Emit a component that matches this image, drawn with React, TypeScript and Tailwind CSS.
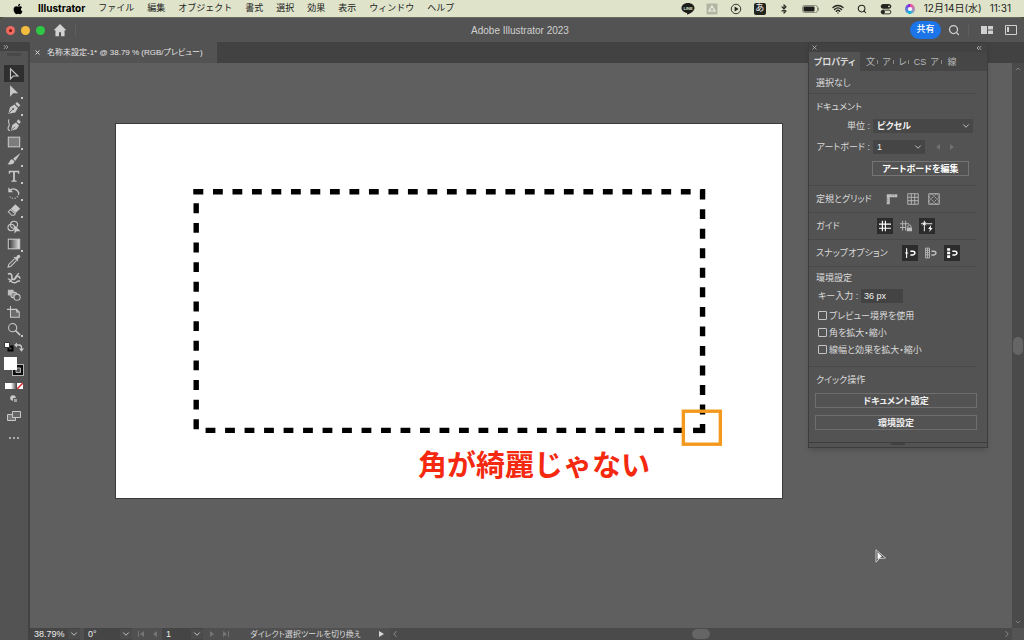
import { useState } from 'react';
import type { ReactNode } from 'react';
import {
  Bluetooth,
  ChevronDown,
  ChevronLeft,
  ChevronRight,
  ChevronUp,
  ChevronsLeft,
  ChevronsRight,
  Search,
  Wifi,
  X,
} from 'lucide-react';
import { FaApple } from 'react-icons/fa';

const menus = ['ファイル', '編集', 'オブジェクト', '書式', '選択', '効果', '表示', 'ウィンドウ', 'ヘルプ'];

const Glyph = ({ children, className = 'size-3.5' }: { children: ReactNode; className?: string }) => (
  <svg className={className} viewBox="0 0 16 16" fill="none" stroke="currentColor" strokeWidth={1.2} aria-hidden="true">
    {children}
  </svg>
);

/**
 * Tools in the left toolbar, top to bottom
 */
const tools: { name: string; more?: boolean; icon: ReactNode }[] = [
  { name: '選択', icon: <path d="M4 2v11.5l3.2-3.2h5.3z" strokeWidth={1.3} /> },
  { name: 'ダイレクト選択', more: true, icon: <path d="M3.500 1.5v13l3.5-3.8h5.800z" fill="currentColor" stroke="none" /> },
  {
    name: 'ペン',
    more: true,
    icon: (
      <>
        <path d="M1.5 14.5l2-7.5 5-3 4 4-3 5z" fill="currentColor" stroke="none" />
        <path d="M9.5 3l2-2 3.8 3.8-2 2z" fill="currentColor" stroke="none" />
        <path d="M2 14l4.5-4.5" stroke="#535353" strokeWidth={1} />
        <circle cx="7" cy="9" r="1.1" fill="#535353" stroke="none" />
      </>
    ),
  },
  {
    name: '曲線',
    icon: (
      <>
        <path d="M4.5 14.5l1.5-6.5 4.3-3 3.5 3.5-2.8 4.3z" fill="currentColor" stroke="none" />
        <path d="M11 4l2-2.5 2.8 3-2 2.3z" fill="currentColor" stroke="none" />
        <path d="M5 14l4-4" stroke="#535353" strokeWidth={1} />
        <path d="M2.5 1.5C-.5 4 4.5 6.500 2 9.500c-1.500 2-1 4.500 1.500 5" />
      </>
    ),
  },
  { name: '長方形', more: true, icon: <rect x="1.500" y="2.500" width="13" height="11" fill="#7d7d7d" /> },
  {
    name: 'ブラシ',
    more: true,
    icon: (
      <g fill="currentColor" stroke="none">
        <path d="M15.500 1L7 7.500l2.500 2.700z" />
        <path d="M6 8.300c-3.300 0-2.500 4.300-5.500 5.300 3 1.600 8 .8 8-2.900z" />
      </g>
    ),
  },
  {
    name: '文字',
    more: true,
    icon: <path d="M2 2h12v3.500h-1.200L12.300 3.600H9v9.300l2 .4V14.500H5v-1.200l2-.4V3.600H3.700L3.200 5.500H2z" fill="currentColor" stroke="none" />,
  },
  {
    name: '回転',
    more: true,
    icon: (
      <>
        <path d="M3 5.500a6 6 0 0 1 10.500 3.500" strokeWidth={1.500} />
        <path d="M13.500 9a6 6 0 0 1-10.500 3" strokeDasharray="1.500 1.500" />
        <path d="M1.500 1.500v5.500h5.500z" fill="currentColor" stroke="none" />
      </>
    ),
  },
  {
    name: '消しゴム',
    more: true,
    icon: (
      <>
        <path d="M9.500 1.500l5.500 5-5 5-5.500-5z" fill="currentColor" stroke="none" />
        <path d="M4 7.500L1.500 10l4 4h2.500l1.500-1.700z" />
      </>
    ),
  },
  {
    name: 'シェイプ形成',
    icon: (
      <>
        <circle cx="8" cy="5.500" r="4" />
        <circle cx="4.800" cy="8.500" r="3.700" />
        <path d="M8.500 6v9.500l2.500-2.600h4.500z" fill="currentColor" stroke="none" />
      </>
    ),
  },
  {
    name: 'グラデーション',
    more: true,
    icon: (
      <>
        <defs>
          <linearGradient id="tool-gradient">
            <stop offset="0" stopColor="#303030" />
            <stop offset="1" stopColor="#e6e6e6" />
          </linearGradient>
        </defs>
        <rect x="1.500" y="2.500" width="13" height="11" fill="url(#tool-gradient)" />
      </>
    ),
  },
  {
    name: 'スポイト',
    icon: (
      <>
        <path d="M8.500 5.500l-6.500 6.500-.8 3 3-.8 6.500-6.500" />
        <path d="M7.500 4l1.500-1 1.200 1L12 1.500a1.800 1.800 0 0 1 2.700 2.600L12.200 6l.8 1-1 1.500z" fill="currentColor" stroke="none" />
      </>
    ),
  },
  {
    name: 'パペットワープ',
    icon: (
      <>
        <path d="M1 3.500c3.500-1.500 5 1 4.500 3.500S7.500 10.500 9 9s1.500-3.500 3.500-3 2 2.500 3 2" strokeWidth={1.800} />
        <path d="M1 9c2 0 2.500 1.500 4 3s4.500 2 6 .500 2.500-1 4-1M2.500 12.500L7 8.500M9 8l4.500-5.500" strokeWidth={1.500} />
      </>
    ),
  },
  {
    name: 'ブレンド',
    icon: (
      <>
        <rect x="1" y="2" width="6.500" height="6.500" fill="#bdbdbd" stroke="none" />
        <rect x="4.500" y="5" width="6.500" height="6" rx="2" fill="#8c8c8c" />
        <circle cx="11.500" cy="10.500" r="3.500" fill="#535353" />
      </>
    ),
  },
  {
    name: 'アートボード',
    icon: (
      <>
        <path d="M4 1v4M0 5h4" />
        <path d="M4 5h7l3 3v6H4z" fill="#6b6b6b" />
        <path d="M11 5v3h3" />
      </>
    ),
  },
  {
    name: 'ズーム',
    more: true,
    icon: (
      <>
        <circle cx="6.500" cy="6.500" r="4.700" />
        <path d="M10 10l5 5" strokeWidth={2} />
      </>
    ),
  },
];

const MenuBar = () => (
  <header className="flex h-[17px] shrink-0 items-center bg-[#dfe3ca] pl-3 pr-[13px] text-[9px] text-[#22241e] [font-feature-settings:normal]">
    <FaApple className="size-3 text-black" />
    <nav className="ml-3.5 flex items-center gap-[13px] whitespace-nowrap">
      <button className="font-[Inter] text-[10px] font-bold text-black">Illustrator</button>
      {menus.map((menu) => (
        <button key={menu}>{menu}</button>
      ))}
    </nav>
    <div className="ml-auto flex items-center">
      <span className="flex w-6 justify-center">
        <svg className="h-3 w-3.5" viewBox="0 0 14 12" aria-label="LINE">
          <path d="M7 0C3.200 0 .5 2.300.5 5.100c0 2.500 2.300 4.500 5.500 5l.3 1.700C10 10.300 13.500 8 13.500 5.100 13.500 2.300 10.800 0 7 0z" fill="#1c1c1a" />
          <text x="7" y="6.600" textAnchor="middle" fontSize="4" fontWeight="700" fill="#dfe3ca">LINE</text>
        </svg>
      </span>
      <span className="flex w-6 justify-center">
        <svg className="size-3" viewBox="0 0 12 12">
          <rect x=".5" y=".5" width="11" height="11" rx="1" fill="#b3b5a3" />
          <path d="M6 3l3 5H3z" fill="none" stroke="#eef0e0" strokeWidth="1.200" />
        </svg>
      </span>
      <span className="flex w-6 justify-center">
        <Glyph className="size-3">
          <circle cx="8" cy="8" r="6.300" />
          <path d="M6.200 4.800v6.400L11.500 8z" fill="currentColor" stroke="none" />
        </Glyph>
      </span>
      <span className="flex w-6 justify-center">
        <span className="flex size-3 items-center justify-center rounded-xs bg-[#22241e] text-[9px] leading-none text-white">あ</span>
      </span>
      <span className="flex w-6 justify-center">
        <Bluetooth className="size-2.5" strokeWidth={2.500} />
      </span>
      <span className="flex w-[30px] justify-center">
        <svg className="h-2 w-[18px]" viewBox="0 0 18 8">
          <rect x=".5" y=".5" width="15" height="7" rx="2" fill="none" stroke="#8b8e7d" />
          <rect x="1.500" y="1.500" width="11" height="5" rx="1" fill="#1c1c1a" />
          <path d="M16.500 2.500v3" stroke="#8b8e7d" />
        </svg>
      </span>
      <span className="flex w-6 justify-center">
        <Wifi className="size-3" strokeWidth={2.800} />
      </span>
      <span className="flex w-6 justify-center">
        <Search className="size-2.5" strokeWidth={2.500} />
      </span>
      <span className="flex w-6 justify-center">
        <Glyph className="size-3">
          <rect x="1.500" y="2" width="13" height="5" rx="2.500" fill="currentColor" />
          <rect x="1.500" y="9.500" width="13" height="5" rx="2.500" />
          <circle cx="4" cy="12" r="2" fill="currentColor" />
          <circle cx="12" cy="4.500" r="1.200" fill="#dfe3ca" stroke="none" />
        </Glyph>
      </span>
      <span className="flex w-6 justify-center">
        <span className="flex size-2.5 items-center justify-center rounded-full bg-conic from-pink-500 via-cyan-500 to-purple-700">
          <span className="size-1 rounded-full bg-white" />
        </span>
      </span>
      <time className="flex gap-2 pl-0.5 font-[Inter,'Noto_Sans_CJK_JP',sans-serif] text-[10px] whitespace-nowrap">
        <span>12月14日(水)</span>
        <span>11:31</span>
      </time>
    </div>
  </header>
);

const TitleBar = () => (
  <div className="flex h-[25px] shrink-0 items-center rounded-t-md border-t border-[#6a6a60] bg-[#535353]">
    <div className="flex w-[130px] items-center pl-1.5">
      <div className="flex gap-1.5">
        <span className="flex size-[9px] items-center justify-center rounded-full bg-[#ee6a5f]">
          <span className="size-[3px] rounded-full bg-[#7c1710]" />
        </span>
        <span className="size-[9px] rounded-full bg-[#f5bd40]" />
        <span className="size-[9px] rounded-full bg-[#2fc845]" />
      </div>
      <button aria-label="ホーム" className="ml-2 text-[#d2d2d2]">
        <svg className="size-3.5" viewBox="0 0 16 16" fill="currentColor">
          <path d="M8 1L.8 8.200h2V15h4v-4.500h2.400V15h4V8.200h2z" />
        </svg>
      </button>
      <span className="ml-2 h-3 w-px bg-[#5e5e5e]" />
    </div>
    <h1 className="flex-1 text-center text-[10px] font-normal text-[#d0d0d0]">Adobe Illustrator 2023</h1>
    <div className="flex w-[114px] items-center text-[#d0d0d0]">
      <button className="h-[18px] w-[31px] rounded-full bg-[#1b74e8] text-[9px] font-medium text-white">共有</button>
      <button aria-label="検索" className="ml-[7px]">
        <Search className="size-3" strokeWidth={2.500} />
      </button>
      <span className="ml-2 h-3 w-px bg-[#5e5e5e]" />
      <button aria-label="ワークスペース" className="ml-3">
        <svg className="h-2 w-3" viewBox="0 0 12 8" fill="currentColor">
          <path d="M0 0h6v8H0zM7 0h5v3.500H7zM7 4.500h5V8H7z" />
        </svg>
      </button>
      <button aria-label="パネル" className="ml-3">
        <svg className="h-2.5 w-3" viewBox="0 0 12 10" fill="none" stroke="currentColor">
          <path d="M.5.5h11v9H.5z" />
          <path d="M2 2h2v5H2z" fill="currentColor" stroke="none" />
        </svg>
      </button>
    </div>
  </div>
);

const Toolbar = () => (
  <aside className="flex w-[30px] shrink-0 flex-col border-r-2 border-[#424242] bg-[#535353] text-[#c8c8c8]">
    <div className="flex h-[9px] items-center bg-[#424242] pl-0.5">
      <ChevronsRight className="size-2" />
    </div>
    <div className="flex h-3.5 justify-center pt-0.5">
      <span className="h-[3px] w-3.5 bg-[#484848]" />
    </div>
    <div className="flex flex-col items-center">
      {tools.map((tool, index) => (
        <button
          key={tool.name}
          aria-label={tool.name}
          className={`relative flex h-[17px] w-5 items-center justify-center ${index === 0 ? 'bg-[#2f2f2f]' : ''}`}
        >
          <Glyph>{tool.icon}</Glyph>
          {tool.more && <span className="absolute right-px bottom-0 size-0.5 bg-[#c8c8c8]" />}
        </button>
      ))}
    </div>
    <div className="flex h-5 items-center justify-between px-1">
      <svg className="size-2.5" viewBox="0 0 10 10">
        <path d="M4.500 4.500h4v4h-4z" fill="none" stroke="#000" strokeWidth="2" />
        <path d="M.5.500h5v5h-5z" fill="#fff" stroke="#333" />
      </svg>
      <svg className="size-2.5" viewBox="0 0 10 10" fill="none" stroke="currentColor" strokeWidth="1.300">
        <path d="M2.500 3h2.500q2.500 0 2.500 2.500V7" />
        <path d="M3 .5v5L0 3zM5 6.500h5L7.500 9.800z" fill="currentColor" stroke="none" />
      </svg>
    </div>
    <svg className="ml-1 h-5 w-5" viewBox="0 0 20 20">
      <path d="M8 7h12v12H8z" fill="#b5b5b5" />
      <path d="M9 8h10v10H9z" fill="#0c0c0c" />
      <path d="M12 11h4.500v4.500H12z" fill="#535353" stroke="#b5b5b5" />
      <path d="M0 0h13v13H0z" fill="#fff" />
    </svg>
    <div className="mx-auto mt-1.5 flex h-1.5">
      <span className="w-1.5 bg-white" />
      <span className="w-1.5 bg-linear-to-r from-white to-neutral-700" />
      <svg className="size-1.5" viewBox="0 0 6 6">
        <path d="M0 0h6v6H0z" fill="#fff" />
        <path d="M0 6L6 0" stroke="#d8232a" strokeWidth="1.500" />
      </svg>
    </div>
    <button aria-label="描画モード" className="mx-auto mt-1.5">
      <svg className="size-2" viewBox="0 0 8 8">
        <circle cx="3" cy="3" r="2.800" fill="#c8c8c8" />
        <path d="M3.500 3.500h4v4h-4z" fill="#a0a0a0" stroke="#535353" />
      </svg>
    </button>
    <button aria-label="スクリーンモード" className="mx-auto mt-2">
      <svg className="h-2.5 w-3.5" viewBox="0 0 14 10" stroke="#c8c8c8">
        <path d="M.5 3.500h8v6h-8z" fill="#777" />
        <path d="M5.500.5h8v6h-8z" fill="#666" />
      </svg>
    </button>
    <button aria-label="ツールバーを編集" className="mx-auto mt-4 flex gap-0.5">
      <span className="size-0.5 rounded-full bg-[#c8c8c8]" />
      <span className="size-0.5 rounded-full bg-[#c8c8c8]" />
      <span className="size-0.5 rounded-full bg-[#c8c8c8]" />
    </button>
  </aside>
);

/**
 * White artboard with the dashed rectangle and its note
 */
const Artboard = () => (
  <div className="relative aspect-video w-[74.5%] border border-[#3a3a3a] bg-white">
    <svg className="size-full" viewBox="0 0 666 374" fill="none">
      <g stroke="#000" strokeWidth="5.400">
        <path d="M77.300 67.700H589" strokeDasharray="9.800 9.700" />
        <path d="M586.500 65.700V309" strokeDasharray="9.900 9.640" />
        <path d="M589 306.500H577" />
        <path d="M567.200 306.500H87.700" strokeDasharray="9.800 9.700" />
        <path d="M80 65V70M80 79.300V308.700" strokeDasharray="9.900 9.750" />
      </g>
      <rect x="567.300" y="287.300" width="37" height="33" stroke="#f39a1e" strokeWidth="3.400" />
    </svg>
    <p className="absolute inset-x-0 top-[86%] pl-[25.500%] text-center text-[29px] leading-10 font-bold whitespace-nowrap text-[#f4290f] [font-feature-settings:normal]">
      角が綺麗じゃない
    </p>
  </div>
);

const VerticalScroll = () => (
  <div className="relative flex w-3 shrink-0 flex-col items-center justify-between bg-[#4a4a4a] py-0.5 text-[#9a9a9a]">
    <ChevronUp className="size-2" />
    <span className="h-[18px] w-2.5 rounded-full bg-[#656565]" />
    <ChevronDown className="size-2" />
  </div>
);

const StatusField = ({ label, value, width }: { label: string; value: string; width: string }) => (
  <div className="flex items-center bg-[#454545]">
    <input aria-label={label} defaultValue={value} className={`h-3 ${width} pt-0.5 pl-1 text-[9px] text-[#ececec] outline-none`} />
    <button aria-label={`${label}を選択`} className="flex w-3 justify-center bg-[#4c4c4c]">
      <ChevronDown className="size-2.5" />
    </button>
  </div>
);

const StatusBar = () => (
  <footer className="flex h-3 shrink-0 items-stretch bg-[#4a4a4a] text-[#d8d8d8]">
    <div className="flex w-[360px] shrink-0 items-center bg-[#505050]">
      <StatusField label="ズーム" value="38.79%" width="w-[38px]" />
      <span className="w-1" />
      <StatusField label="回転" value="0°" width="w-9" />
      <svg className="mr-1 ml-1.5 h-1.5 w-5" viewBox="0 0 20 6" fill="#757575">
        <path d="M0 0h1v6H0zM6 0v6L2 3zM19 0v6l-4-3z" />
      </svg>
      <StatusField label="アートボード番号" value="1" width="w-[29px]" />
      <svg className="mr-1 ml-1.5 h-1.5 w-5" viewBox="0 0 20 6" fill="#757575">
        <path d="M1 0v6l4-3zM14 0v6l4-3zM19 0h1v6h-1z" />
      </svg>
      <span className="flex-1 pt-0.5 text-center text-[8px] leading-3 whitespace-nowrap">ダイレクト選択ツールを切り換え</span>
      <svg className="mr-1 h-1.5 w-2" viewBox="0 0 8 6" fill="currentColor">
        <path d="M1 0v6l5-3z" />
      </svg>
    </div>
    <div className="flex flex-1 items-center justify-between text-[#9a9a9a]">
      <ChevronLeft className="size-2.5" />
      <span className="h-2.5 w-[18px] rounded-full bg-[#656565]" />
      <ChevronRight className="size-2.5" />
    </div>
    <span className="w-3 bg-[#545454]" />
  </footer>
);

const IconToggle = ({ label, active, children }: { label: string; active?: boolean; children: ReactNode }) => (
  <button
    aria-label={label}
    aria-pressed={!!active}
    className={`flex size-4 items-center justify-center ${active ? 'bg-[#2c2c2c] text-white' : 'text-[#bcbcbc]'}`}
  >
    <Glyph className="size-3">{children}</Glyph>
  </button>
);

const CheckRow = ({ id, label }: { id: string; label: string }) => (
  <div className="flex h-[17px] items-center gap-0.5 pl-[9px]">
    <input id={id} type="checkbox" className="size-[9px] appearance-none rounded-[1px] border border-[#c4c4c4] checked:bg-[#c4c4c4]" />
    <label htmlFor={id}>{label}</label>
  </div>
);

const magnet = <path d="M8.500 5.500H12a2.500 2.500 0 0 1 0 5H8.500" strokeWidth={2} />;

const PropertiesPanel = () => {
  const [tab, setTab] = useState('プロパティ');

  return (
    <section className="absolute top-0 right-9 w-45 border border-[#3d3d3d] bg-[#535353] text-[9px] leading-3 text-[#dadada] shadow-md">
      <div className="flex h-[9px] items-center justify-between bg-[#424242] px-0.5 pr-1">
        <X className="size-[7px]" />
        <ChevronsLeft className="size-2" />
      </div>
      <div className="flex h-[19px] bg-[#464646] whitespace-nowrap">
        <button
          onClick={() => setTab('プロパティ')}
          className={`mr-1 w-[51px] shrink-0 font-bold ${tab === 'プロパティ' ? 'bg-[#535353]' : ''}`}
        >
          プロパティ
        </button>
        {['文', 'ア', 'レ', 'CS', 'ア', '線'].map((name, index) => (
          <button
            key={index}
            onClick={() => setTab(name)}
            className="flex w-4 shrink-0 items-center justify-center overflow-hidden text-[#b8b8b8]"
          >
            {name}
            {index < 5 && name !== 'CS' && <span className="ml-0.5 h-1 w-px bg-[#8a8a8a]" />}
          </button>
        ))}
      </div>

      <div className="mr-2.5">
        <h2 className="flex h-[23px] items-center border-b border-[#494949] pt-px pl-[7px]">選択なし</h2>

        {/* Document */}
        <div className="border-b border-[#494949] pb-[9px]">
          <h3 className="flex h-[25px] items-center pl-[7px]">ドキュメント</h3>
          <div className="flex h-3.5 items-center">
            <label htmlFor="unit" className="w-[61px] text-right">単位 :</label>
            <div className="relative ml-[3px] flex-1 pr-1">
              <select id="unit" className="block h-3.5 w-full appearance-none bg-[#474747] pl-1 font-bold text-[#f0f0f0]">
                <option>ピクセル</option>
                <option>ミリメートル</option>
              </select>
              <ChevronDown className="pointer-events-none absolute top-0.5 right-1.5 size-2.5" />
            </div>
          </div>
          <div className="mt-[7px] flex h-3.5 items-center">
            <label htmlFor="artboard" className="w-[61px] text-right whitespace-nowrap">アートボード :</label>
            <div className="relative ml-[3px]">
              <select id="artboard" className="block h-3.5 w-[52px] appearance-none bg-[#454545] pl-1 text-[#f0f0f0]">
                <option>1</option>
              </select>
              <ChevronDown className="pointer-events-none absolute top-0.5 right-0.5 size-2.5" />
            </div>
            <svg className="ml-2.5 h-1.5 w-5" viewBox="0 0 20 6" fill="#707070">
              <path d="M5 0v6L1 3zM15 0v6l4-3z" />
            </svg>
          </div>
          <button className="mt-[7px] ml-[63px] block h-[15px] w-[97px] border border-[#757575] font-bold text-white">
            アートボードを編集
          </button>
        </div>

        {/* Rulers, guides and snapping */}
        <div className="flex h-[27px] items-center border-b border-[#494949] pl-[7px]">
          <h3 className="w-[68px]">定規とグリッド</h3>
          <div className="flex gap-[5px]">
            <IconToggle label="定規">
              <path d="M3 15V3.500h12" strokeWidth={4} />
              <path d="M1 8h2M1 11h2M8 1.500v2M11 1.500v2" stroke="#535353" strokeWidth={0.600} />
            </IconToggle>
            <IconToggle label="グリッド">
              <path d="M1 1h14v14H1zM1 5.700h14M1 10.300h14M5.700 1v14M10.300 1v14" />
            </IconToggle>
            <IconToggle label="透明グリッド">
              <path d="M1 1h14v14H1z" />
              <path d="M1 5l4-4M1 11L11 1M5 15L15 5M11 15l4-4M5 1l10 10M1 5l10 10M11 1l4 4M1 11l4 4" strokeWidth={1} strokeDasharray="2 1" />
            </IconToggle>
          </div>
        </div>
        <div className="flex h-[27px] items-center border-b border-[#494949] pl-[7px]">
          <h3 className="w-[61px]">ガイド</h3>
          <div className="flex gap-[5px]">
            <IconToggle label="ガイドを表示" active>
              <path d="M4.500 1v14M8.500 1v14M0 5.500h16M0 11h16" strokeWidth={1.500} />
            </IconToggle>
            <IconToggle label="ガイドをロック">
              <path d="M3.500 1v13M7.500 1v13M0 5h12M0 10h8" />
              <path d="M9 10h7v5H9z" fill="currentColor" stroke="none" />
              <path d="M10.500 10V8.500a2 2 0 0 1 4 0V10" />
            </IconToggle>
            <IconToggle label="スマートガイド" active>
              <path d="M4.500 1v14M0 5h15M2.500 3l4 4M6.500 3l-4 4" />
              <path d="M13.500 6.500L9.500 12h2.500l-1 4 4.500-5.500H13z" fill="currentColor" stroke="none" />
            </IconToggle>
          </div>
        </div>
        <div className="flex h-[27px] items-center border-b border-[#494949] pl-[7px]">
          <h3 className="w-[86px] whitespace-nowrap">スナップオプション</h3>
          <div className="flex gap-[5px]">
            <IconToggle label="ポイントにスナップ" active>
              <path d="M3.500 1.500v13M1.500 8h4" strokeWidth={1.500} />
              {magnet}
            </IconToggle>
            <IconToggle label="グリッドにスナップ">
              <path d="M.5 1.500h5.500v13H.5zM.5 4.500H6M.5 7.500H6M.5 10.500H6M3.200 1.500v13" />
              {magnet}
            </IconToggle>
            <IconToggle label="ピクセルにスナップ" active>
              <path d="M1.500 1.500h4v3.500h-4zM1.500 6.300h4v3.500h-4zM1.500 11h4v3.500h-4z" fill="currentColor" stroke="none" />
              {magnet}
            </IconToggle>
          </div>
        </div>

        {/* Preferences */}
        <div className="border-b border-[#494949] pb-2">
          <h3 className="flex h-[22px] items-center pl-[7px]">環境設定</h3>
          <div className="flex h-3.5 items-center pl-[9px]">
            <label htmlFor="key-input" className="w-[43px]">キー入力 :</label>
            <input id="key-input" defaultValue="36 px" className="h-3.5 w-[42px] bg-[#434343] pl-[3px] text-[#f0f0f0] outline-none" />
          </div>
          <div className="mt-1">
            <CheckRow id="preview-bounds" label="プレビュー境界を使用" />
            <CheckRow id="scale-corners" label="角を拡大・縮小" />
            <CheckRow id="scale-strokes" label="線幅と効果を拡大・縮小" />
          </div>
        </div>

        {/* Quick actions */}
        <div className="pb-3 pl-1.5">
          <h3 className="flex h-[26px] items-center pl-px">クイック操作</h3>
          <button className="block h-[15px] w-full border border-[#6e6e6e] font-bold text-[#f0f0f0]">ドキュメント設定</button>
          <button className="mt-[7px] block h-[15px] w-full border border-[#6e6e6e] font-bold text-[#f0f0f0]">環境設定</button>
        </div>
      </div>
      <div className="flex h-[5px] justify-center border-t border-[#3d3d3d]">
        <span className="h-0.5 w-3.5 bg-[#424242]" />
      </div>
    </section>
  );
};

const Cursor = () => (
  <svg className="absolute top-[86%] left-[86%] h-3.5 w-3" viewBox="0 0 12 14">
    <path d="M1 .8v12.400L4.500 9.500l6-.5z" fill="#444" stroke="#cfcfcf" strokeWidth="1" />
    <path d="M2.500 3v7.500l4.500-3z" fill="#fff" />
  </svg>
);

export default function App() {
  return (
    <div className="flex h-screen flex-col overflow-hidden bg-[#4e4f42] font-['Liberation_Sans','Noto_Sans_CJK_JP',sans-serif] [font-feature-settings:'palt']">
      <MenuBar />
      <TitleBar />
      <div className="relative flex min-h-0 flex-1">
        <Toolbar />
        <div className="flex min-w-0 flex-1 flex-col">
          <div className="flex h-[21px] shrink-0 bg-[#424242]">
            <div className="flex items-center gap-1.5 bg-[#535353] pr-3.5 pl-1 text-[8px] whitespace-nowrap text-[#e4e4e4]">
              <button aria-label="閉じる">
                <X className="size-[7px]" strokeWidth={3} />
              </button>
              <span>名称未設定-1* @ 38.79 % (RGB/プレビュー)</span>
            </div>
          </div>
          <div className="flex min-h-0 flex-1">
            <main className="relative min-w-0 flex-1 bg-[#5f5f5f] pt-[60px] pl-[85px]">
              <Artboard />
              <Cursor />
            </main>
            <VerticalScroll />
          </div>
          <StatusBar />
        </div>
        <PropertiesPanel />
      </div>
    </div>
  );
}
